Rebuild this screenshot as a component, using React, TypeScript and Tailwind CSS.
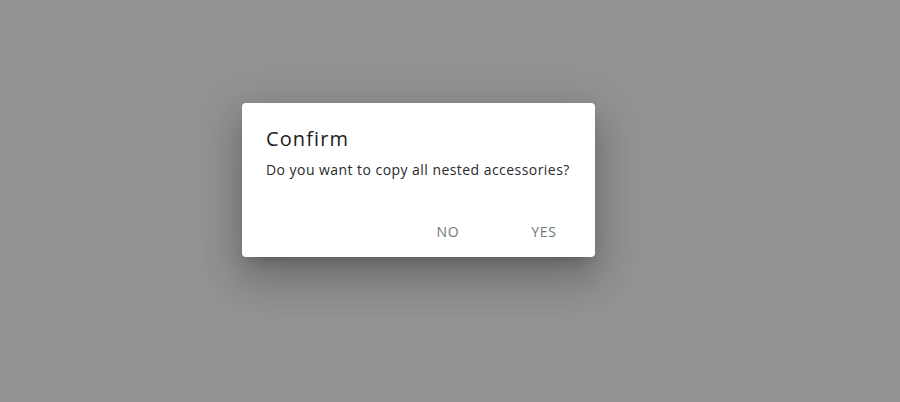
export default function App() {
  return (
    <div
      className="w-[900px] h-[402px] bg-[#939393] relative overflow-hidden"
      style={{ fontFamily: '"Open Sans", "Liberation Sans", sans-serif' }}
    >
      <div className="absolute left-[242px] top-[103px] w-[353px] h-[154px] bg-white rounded-[4px] shadow-[0_11px_15px_-7px_rgba(0,0,0,0.2),0_24px_38px_3px_rgba(0,0,0,0.14),0_9px_46px_8px_rgba(0,0,0,0.12)] flex flex-col">
        <div className="px-6 pt-[20px] text-[20px] leading-[32px] text-[#212121] tracking-[1.1px]">Confirm</div>
        <div className="pl-6 pt-[5px] text-[14px] leading-[20px] text-[#2a2a2a] tracking-[0.45px] whitespace-nowrap">
          Do you want to copy all nested accessories?
        </div>
        <div className="mt-auto flex justify-end gap-[32px] pr-[19px] pb-[8px]">
          <button className="w-[64px] h-[36px] text-[14px] tracking-[0.8px] text-[#6b7d74] uppercase">No</button>
          <button className="w-[64px] h-[36px] text-[14px] tracking-[0.8px] text-[#6b7d74] uppercase">Yes</button>
        </div>
      </div>
    </div>
  );
}
